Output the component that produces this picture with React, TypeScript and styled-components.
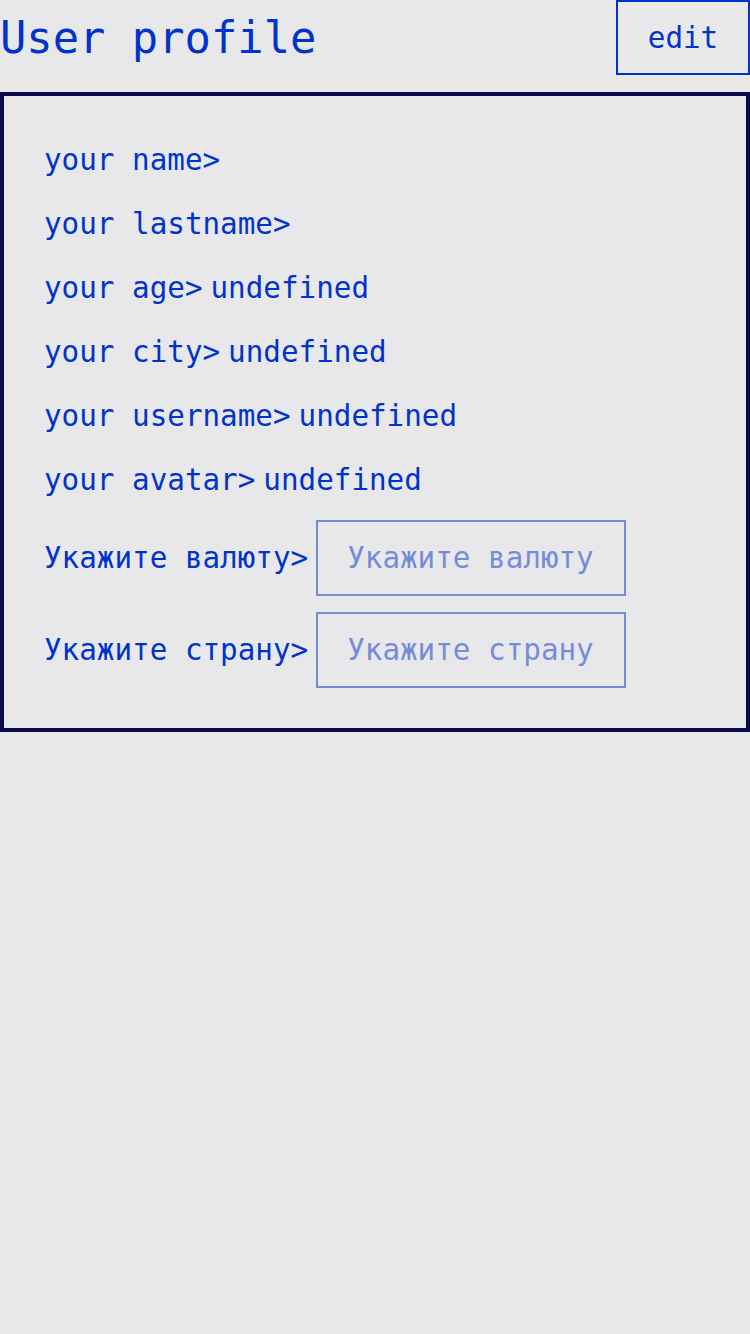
import React from "react";
import styled, { createGlobalStyle } from "styled-components";

const GlobalStyle = createGlobalStyle`
  html, body {
    margin: 0;
    padding: 0;
    background: #e8e8ea;
  }
  body {
    font-family: "DejaVu Sans Mono", "Liberation Mono", monospace;
    color: #0033cc;
  }
  * { box-sizing: border-box; }
`;

const Page = styled.div`
  width: 750px;
  min-height: 1334px;
  background: #e8e8ea;
`;

const Header = styled.header`
  display: flex;
  justify-content: space-between;
  align-items: center;
  height: 75px;
  margin-bottom: 17px;
`;

const Title = styled.h1`
  margin: 0;
  font-size: 43.8px;
  font-weight: 400;
  color: #0033cc;
`;

const EditButton = styled.button`
  width: 134px;
  height: 75px;
  border: 2px solid #0033cc;
  background: transparent;
  color: #0033cc;
  font-family: inherit;
  font-size: 29.25px;
  padding: 0;
  cursor: pointer;
`;

const Card = styled.section`
  border: 4px solid #0a0a4c;
  padding: 40px;
  display: flex;
  flex-direction: column;
  gap: 16px;
`;

const Row = styled.div`
  display: flex;
  align-items: center;
  gap: 8px;
  min-height: 48px;
  font-size: 29.25px;
  line-height: 48px;
`;

const Label = styled.span`
  color: #0033cc;
  white-space: pre;
`;

const Value = styled.span`
  color: #0033cc;
`;

const Field = styled.input`
  width: 310px;
  height: 76px;
  padding: 0 27px 0 29px;
  border: 2px solid #0033cc;
  background: transparent;
  font-family: inherit;
  font-size: 29.25px;
  color: #0033cc;
  opacity: 0.5;
  outline: none;
  &::placeholder {
    color: #0033cc;
    opacity: 1;
  }
`;

const rows: { label: string; value?: string }[] = [
  { label: "your name>" },
  { label: "your lastname>" },
  { label: "your age>", value: "undefined" },
  { label: "your city>", value: "undefined" },
  { label: "your username>", value: "undefined" },
  { label: "your avatar>", value: "undefined" },
];

const selects = ["Укажите валюту", "Укажите страну"];

export default function App() {
  return (
    <Page>
      <GlobalStyle />
      <Header>
        <Title>User profile</Title>
        <EditButton>edit</EditButton>
      </Header>
      <Card>
        {rows.map((r) => (
          <Row key={r.label}>
            <Label>{r.label}</Label>
            {r.value && <Value>{r.value}</Value>}
          </Row>
        ))}
        {selects.map((s) => (
          <Row key={s}>
            <Label>{s}&gt;</Label>
            <Field readOnly placeholder={s} />
          </Row>
        ))}
      </Card>
    </Page>
  );
}
